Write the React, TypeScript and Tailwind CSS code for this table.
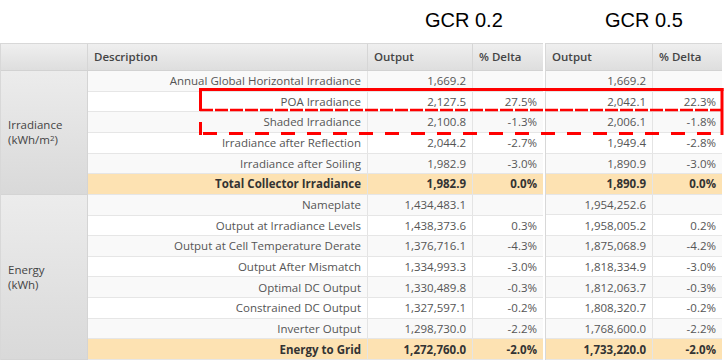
import React from "react";

type Row = { label: string; a: string; ad: string; b: string; bd: string; total?: boolean };

const IRRADIANCE: Row[] = [
  { label: "Annual Global Horizontal Irradiance", a: "1,669.2", ad: "", b: "1,669.2", bd: "" },
  { label: "POA Irradiance", a: "2,127.5", ad: "27.5%", b: "2,042.1", bd: "22.3%" },
  { label: "Shaded Irradiance", a: "2,100.8", ad: "-1.3%", b: "2,006.1", bd: "-1.8%" },
  { label: "Irradiance after Reflection", a: "2,044.2", ad: "-2.7%", b: "1,949.4", bd: "-2.8%" },
  { label: "Irradiance after Soiling", a: "1,982.9", ad: "-3.0%", b: "1,890.9", bd: "-3.0%" },
  { label: "Total Collector Irradiance", a: "1,982.9", ad: "0.0%", b: "1,890.9", bd: "0.0%", total: true },
];

const ENERGY: Row[] = [
  { label: "Nameplate", a: "1,434,483.1", ad: "", b: "1,954,252.6", bd: "" },
  { label: "Output at Irradiance Levels", a: "1,438,373.6", ad: "0.3%", b: "1,958,005.2", bd: "0.2%" },
  { label: "Output at Cell Temperature Derate", a: "1,376,716.1", ad: "-4.3%", b: "1,875,068.9", bd: "-4.2%" },
  { label: "Output After Mismatch", a: "1,334,993.3", ad: "-3.0%", b: "1,818,334.9", bd: "-3.0%" },
  { label: "Optimal DC Output", a: "1,330,489.8", ad: "-0.3%", b: "1,812,063.7", bd: "-0.3%" },
  { label: "Constrained DC Output", a: "1,327,597.1", ad: "-0.2%", b: "1,808,320.7", bd: "-0.2%" },
  { label: "Inverter Output", a: "1,298,730.0", ad: "-2.2%", b: "1,768,600.0", bd: "-2.2%" },
  { label: "Energy to Grid", a: "1,272,760.0", ad: "-2.0%", b: "1,733,220.0", bd: "-2.0%", total: true },
];

const ALL = [...IRRADIANCE, ...ENERGY];

function rowBg(r: Row, i: number) {
  if (r.total) return "bg-[#fde2b2] font-bold text-[#333]";
  return i % 2 === 0 ? "bg-[#f9f9f9] text-[#555]" : "bg-white text-[#555]";
}

function Cell({ w, children, last }: { w: string; children?: React.ReactNode; last?: boolean }) {
  return (
    <div className={`${w} h-full flex items-center justify-end pr-[6px] whitespace-nowrap ${last ? "" : "border-r border-[#e4e4e4]"}`}>
      {children}
    </div>
  );
}

function HeadCell({ w, children, last }: { w: string; children?: React.ReactNode; last?: boolean }) {
  return (
    <div className={`${w} h-full flex items-center pl-[6px] ${last ? "" : "border-r border-[#d6d6d6]"}`}>
      {children}
    </div>
  );
}

function GroupLabel({ rows, children }: { rows: number; children: React.ReactNode }) {
  return (
    <div
      className="w-[87px] border-r border-b border-[#d4d4d4] bg-linear-to-b from-[#ececec] to-[#d9d9d9] flex items-center px-[7px] text-[#444] leading-[15px]"
      style={{ height: rows * 20.65 }}
    >
      <div>{children}</div>
    </div>
  );
}

function Overlay() {
  return (
    <svg className="absolute inset-0 pointer-events-none" width="725" height="362">
      <g stroke="#ff0000" fill="none" strokeWidth="3">
        <line x1="199" y1="89.5" x2="723.5" y2="89.5" />
        <line x1="200.5" y1="88" x2="200.5" y2="111" />
        <line x1="722" y1="88" x2="722" y2="135" />
        <line x1="200" y1="110" x2="722" y2="110" strokeWidth="2.5" strokeDasharray="13 2" />
        <line x1="200.5" y1="122" x2="200.5" y2="135" />
        <line x1="203" y1="133.5" x2="722" y2="133.5" strokeDasharray="14 12" />
      </g>
    </svg>
  );
}

export default function App() {
  return (
    <div
      className="relative w-[725px] h-[362px] overflow-hidden bg-white text-[11.5px]"
      style={{ fontFamily: '"Open Sans", "Noto Sans", sans-serif' }}
    >
      <div className="h-[43px] flex text-[20px] leading-[24px] pt-[8px] text-black" style={{ fontFamily: '"Liberation Sans", Arial, sans-serif' }}>
        <div className="w-[425px]" />
        <div className="w-[180px]">GCR 0.2</div>
        <div>GCR 0.5</div>
      </div>

      <div className="flex">
        {/* GCR 0.2 table */}
        <div className="w-[543px] border-l border-t border-[#d8d8d8]">
          <div className="h-[27px] flex border-b border-[#d2d2d2] bg-linear-to-b from-[#efefef] to-[#dedede] font-semibold text-[#444]">
            <HeadCell w="w-[87px]" />
            <HeadCell w="w-[280px]">Description</HeadCell>
            <HeadCell w="w-[105px]">Output</HeadCell>
            <HeadCell w="flex-1" last>% Delta</HeadCell>
          </div>
          {[{ rows: IRRADIANCE, off: 0 }, { rows: ENERGY, off: IRRADIANCE.length }].map((g, gi) => (
            <div key={gi} className="flex">
              <GroupLabel rows={g.rows.length}>
                {gi === 0 ? (
                  <>
                    <div>Irradiance</div>
                    <div>
                      (kWh/m<span className="text-[8px] align-[3px] leading-none">2</span>)
                    </div>
                  </>
                ) : (
                  <>
                    <div>Energy</div>
                    <div>(kWh)</div>
                  </>
                )}
              </GroupLabel>
              <div className="flex-1">
                {g.rows.map((r, i) => (
                  <div key={r.label} className={`h-[20.65px] flex border-b border-[#e6e6e6] ${rowBg(r, g.off + i)}`}>
                    <Cell w="w-[280px]">{r.label}</Cell>
                    <Cell w="w-[105px]">{r.a}</Cell>
                    <Cell w="flex-1" last>{r.ad}</Cell>
                  </div>
                ))}
              </div>
            </div>
          ))}
        </div>

        {/* GCR 0.5 table */}
        <div className="w-[177px] ml-[2px] border-l border-t border-[#d8d8d8]">
          <div className="h-[27px] flex border-b border-[#d2d2d2] bg-linear-to-b from-[#efefef] to-[#dedede] font-semibold text-[#444]">
            <HeadCell w="w-[107px]">Output</HeadCell>
            <HeadCell w="flex-1" last>% Delta</HeadCell>
          </div>
          {ALL.map((r, i) => (
            <div key={r.label} className={`h-[20.65px] flex border-b border-[#e6e6e6] ${rowBg(r, i)}`}>
              <Cell w="w-[107px]">{r.b}</Cell>
              <Cell w="flex-1" last>{r.bd}</Cell>
            </div>
          ))}
        </div>
      </div>

      <Overlay />
    </div>
  );
}
